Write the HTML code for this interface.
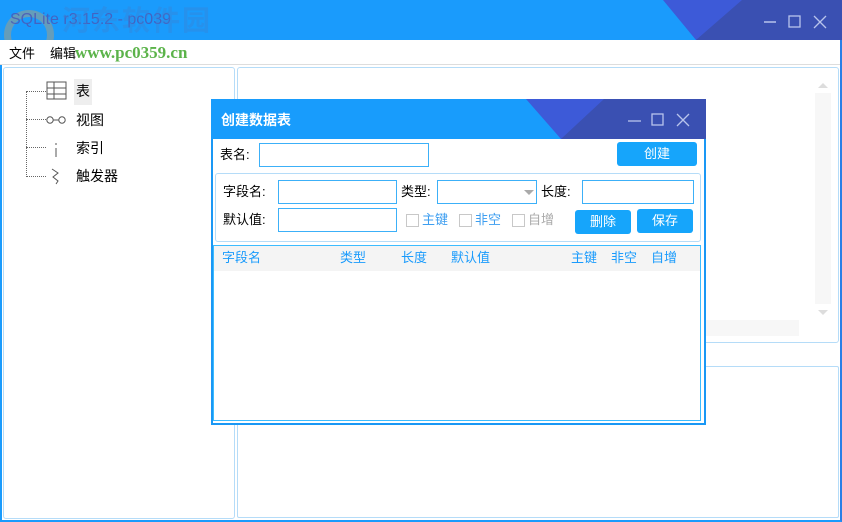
<!DOCTYPE html>
<html><head><meta charset="utf-8"><style>
*{margin:0;padding:0;box-sizing:border-box}
body{width:842px;height:522px;position:relative;overflow:hidden;background:#fff;font-family:"Liberation Sans","Noto Sans CJK SC",sans-serif;font-size:13px;color:#000;line-height:16px}
.a{position:absolute}
.inp{position:absolute;border:1px solid #3cb0f8;background:#fff}
.btn{position:absolute;background:#16a5fb;color:#fff;border-radius:3px;text-align:center;font-size:13px}
.cb{position:absolute;width:13px;height:13px;border:1px solid #c8c8c8}
</style></head><body>
<div class="a" style="left:0;top:0;width:842px;height:522px;border:2px solid #1a9bfc;border-top:none;border-right-color:#2a7fe6"></div>
<div class="a" style="left:0;top:0;width:842px;height:40px;background:#1a9bfc"></div>
<svg class="a" style="left:600px;top:0" width="242" height="40"><polygon points="63,0 242,0 242,40 96,40" fill="#3d5ad8"/><polygon points="142,0 242,0 242,40 96,40" fill="#3a50b2"/>
<line x1="164" y1="22" x2="176" y2="22" stroke="#b8c4ec" stroke-width="1.5"/>
<rect x="189" y="16" width="11" height="11" fill="none" stroke="#b8c4ec" stroke-width="1.3"/>
<path d="M214 16 L226 28 M226 16 L214 28" stroke="#b8c4ec" stroke-width="1.3"/></svg>
<div class="a" style="left:4px;top:10px;width:50px;height:50px;border-radius:50%;border:7px solid #f3a040;opacity:.35"></div>
<div class="a" style="left:10px;top:12px;font-size:16px;color:#4a5ab8;opacity:.85">SQLite r3.15.2 - pc039</div>
<div class="a" style="left:62px;top:5px;font-size:28px;line-height:32px;font-weight:bold;color:#3d7fd0;opacity:.35;letter-spacing:2px">河东软件园</div>
<div class="a" style="left:0;top:40px;width:840px;height:25px;background:#fff;border-bottom:1px solid #ddd"></div>
<div class="a" style="left:9px;top:46px">文件</div>
<div class="a" style="left:50px;top:46px">编辑</div>
<div class="a" style="left:75px;top:43px;font-size:17px;line-height:20px;font-weight:bold;color:#5bb34a;font-family:'Liberation Serif',serif">www.pc0359.cn</div>
<div class="a" style="left:3px;top:67px;width:232px;height:452px;border:1px solid #b5dcf8;border-radius:3px"></div>
<div class="a" style="left:26px;top:91px;height:86px;border-left:1px dotted #666"></div>
<div class="a" style="left:26px;top:91px;width:20px;border-top:1px dotted #666"></div>
<div class="a" style="left:26px;top:119px;width:20px;border-top:1px dotted #666"></div>
<div class="a" style="left:26px;top:147px;width:20px;border-top:1px dotted #666"></div>
<div class="a" style="left:26px;top:176px;width:20px;border-top:1px dotted #666"></div>
<svg class="a" style="left:46px;top:81px" width="22" height="105"><rect x="1" y="1" width="19" height="17" fill="none" stroke="#555"/><path d="M1 7H20M1 13H20M8 1V18" stroke="#555"/>
<circle cx="4" cy="39" r="3.2" fill="none" stroke="#555"/><circle cx="16" cy="39" r="3.2" fill="none" stroke="#555"/><path d="M7 39H13" stroke="#555"/>
<path d="M10 62V64M10 67V76" stroke="#555"/>
<path d="M6 88 L12 92 L7 96 L12 100 L10 103" fill="none" stroke="#555"/></svg>
<div class="a" style="left:74px;top:79px;width:18px;height:26px;background:#eee"></div>
<div class="a" style="left:76px;top:83px;font-size:14px">表</div>
<div class="a" style="left:76px;top:112px;font-size:14px">视图</div>
<div class="a" style="left:76px;top:140px;font-size:14px">索引</div>
<div class="a" style="left:76px;top:168px;font-size:14px">触发器</div>
<div class="a" style="left:237px;top:67px;width:602px;height:276px;border:1px solid #b5dcf8;border-radius:3px"></div>
<div class="a" style="left:815px;top:93px;width:16px;height:211px;background:#f7f7f7"></div>
<div class="a" style="left:818px;top:83px;width:0;height:0;border:5px solid transparent;border-bottom-color:#ddd;border-top:none"></div>
<div class="a" style="left:818px;top:310px;width:0;height:0;border:5px solid transparent;border-top-color:#ddd;border-bottom:none"></div>
<div class="a" style="left:240px;top:320px;width:559px;height:16px;background:#f7f7f7"></div>
<div class="a" style="left:237px;top:366px;width:602px;height:152px;border:1px solid #b5dcf8;border-radius:2px"></div>
<div class="a" style="left:211px;top:99px;width:495px;height:326px;background:#fff;border:2px solid #1a98f5;border-top:none"></div>
<div class="a" style="left:211px;top:99px;width:495px;height:40px;background:#189cfc"></div>
<svg class="a" style="left:526px;top:99px" width="180" height="40"><polygon points="0,0 180,0 180,40 35,40" fill="#3d5ad8"/><polygon points="78,0 180,0 180,40 35,40" fill="#3a50b2"/>
<path d="M102 22H115" stroke="#b8c4ec" stroke-width="1.3"/><rect x="126" y="15" width="11" height="11" fill="none" stroke="#b8c4ec" stroke-width="1.3"/><path d="M151 15L163 27M163 15L151 27" stroke="#b8c4ec" stroke-width="1.3"/></svg>
<div class="a" style="left:221px;top:112px;color:#fff;font-weight:bold;font-size:14px">创建数据表</div>
<div class="a" style="left:220px;top:147px">表名:</div>
<div class="inp" style="left:259px;top:143px;width:170px;height:24px"></div>
<div class="btn" style="left:617px;top:142px;width:80px;height:24px;line-height:24px">创建</div>
<div class="a" style="left:215px;top:173px;width:486px;height:69px;border:1px solid #b5dcf8;border-radius:3px"></div>
<div class="a" style="left:223px;top:184px">字段名:</div>
<div class="inp" style="left:278px;top:180px;width:119px;height:24px"></div>
<div class="a" style="left:401px;top:184px">类型:</div>
<div class="a" style="left:437px;top:180px;width:100px;height:24px;border:1px solid #3cb0f8"></div>
<div class="a" style="left:524px;top:190px;border:5px solid transparent;border-top-color:#aaa;border-bottom:none"></div>
<div class="a" style="left:541px;top:184px">长度:</div>
<div class="inp" style="left:582px;top:180px;width:112px;height:24px"></div>
<div class="a" style="left:223px;top:212px">默认值:</div>
<div class="inp" style="left:278px;top:208px;width:119px;height:24px"></div>
<div class="cb" style="left:406px;top:214px"></div><div class="a" style="left:422px;top:212px;color:#3d9ef0">主键</div>
<div class="cb" style="left:459px;top:214px"></div><div class="a" style="left:475px;top:212px;color:#3d9ef0">非空</div>
<div class="cb" style="left:512px;top:214px"></div><div class="a" style="left:528px;top:212px;color:#aaa">自增</div>
<div class="btn" style="left:575px;top:210px;width:56px;height:24px;line-height:24px">删除</div>
<div class="btn" style="left:637px;top:209px;width:56px;height:24px;line-height:24px">保存</div>
<div class="a" style="left:213px;top:245px;width:488px;height:176px;border:1px solid #3cbcff"></div>
<div class="a" style="left:214px;top:246px;width:486px;height:25px;background:#f4f4f4"></div>
<div class="a" style="left:222px;top:250px;color:#1a9bfc">字段名</div>
<div class="a" style="left:340px;top:250px;color:#1a9bfc">类型</div>
<div class="a" style="left:401px;top:250px;color:#1a9bfc">长度</div>
<div class="a" style="left:451px;top:250px;color:#1a9bfc">默认值</div>
<div class="a" style="left:571px;top:250px;color:#1a9bfc">主键</div>
<div class="a" style="left:611px;top:250px;color:#1a9bfc">非空</div>
<div class="a" style="left:651px;top:250px;color:#1a9bfc">自增</div>
</body></html>
